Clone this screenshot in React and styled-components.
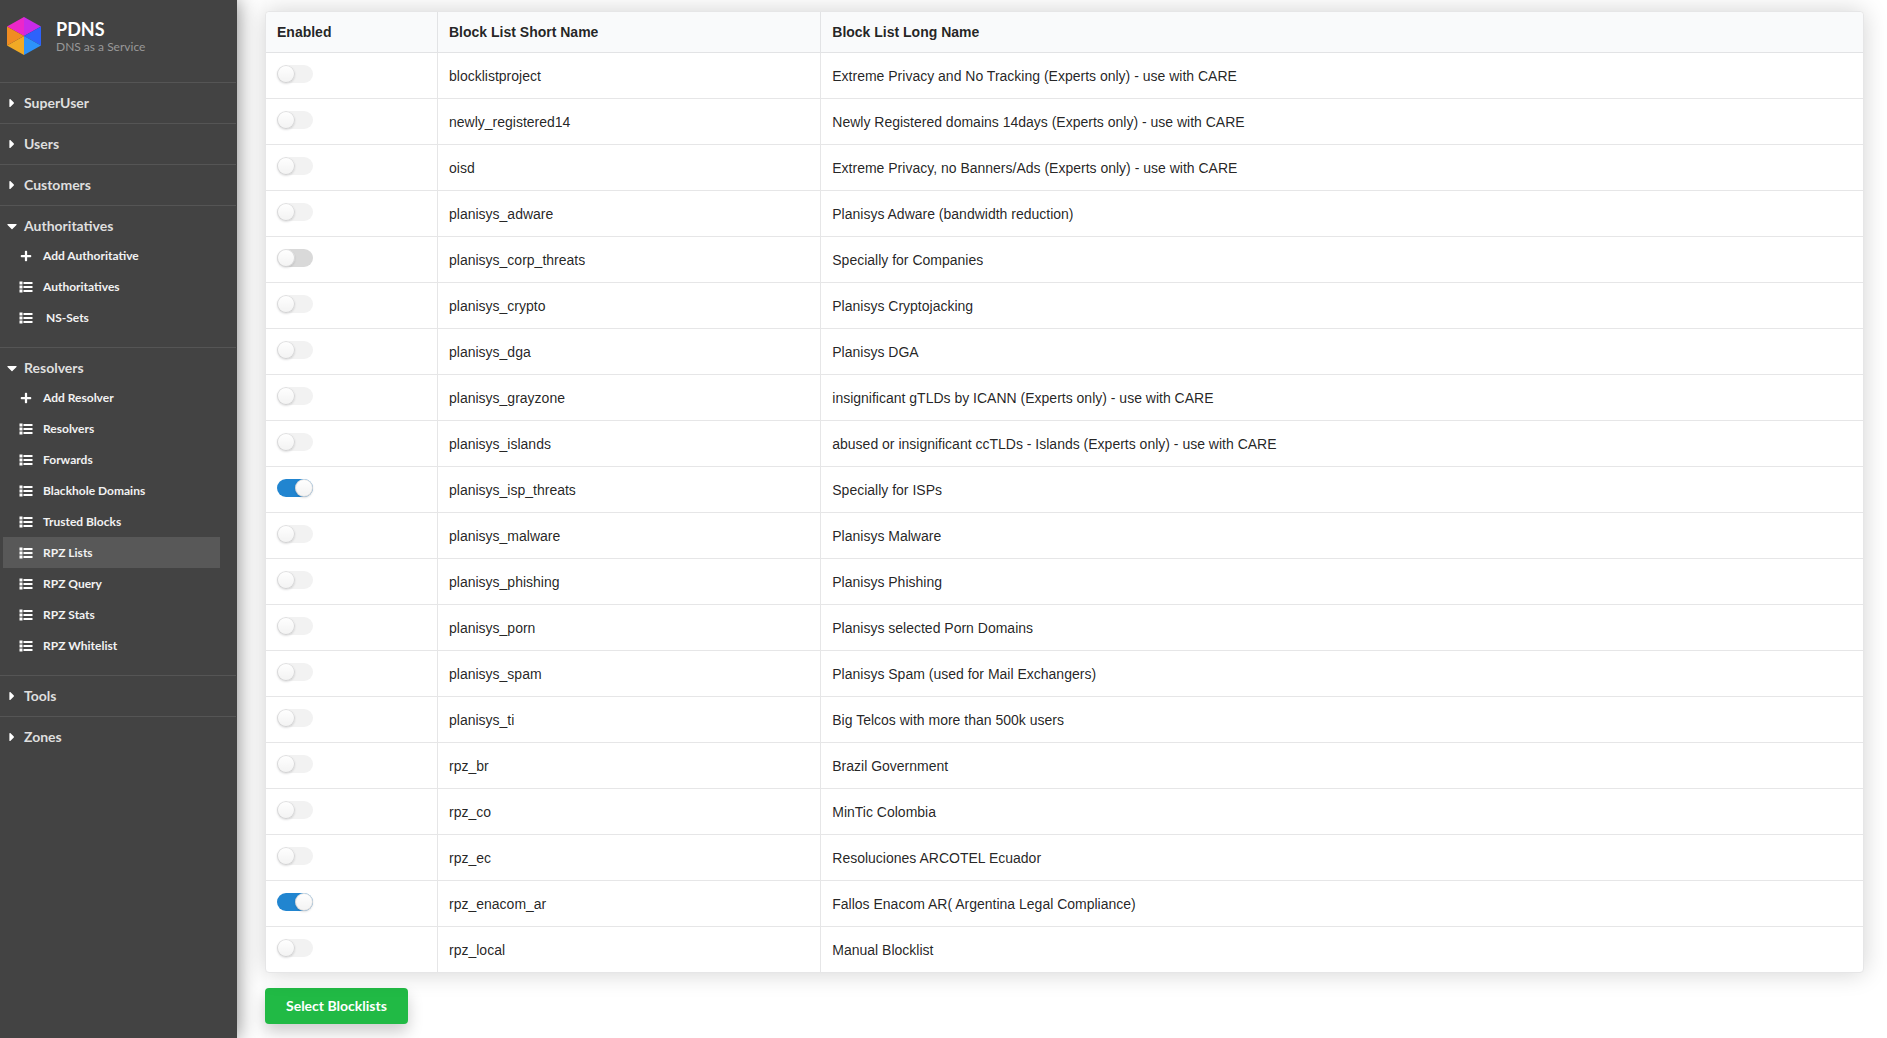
import React, { useState } from "react";
import styled, { createGlobalStyle } from "styled-components";
import { FaCaretDown, FaCaretRight, FaPlus } from "react-icons/fa";

const menu = [
  { title: "SuperUser" },
  { title: "Users" },
  { title: "Customers" },
  {
    title: "Authoritatives",
    items: [
      { label: "Add Authoritative", add: true },
      { label: "Authoritatives" },
      { label: "\u00a0NS-Sets" },
    ],
  },
  {
    title: "Resolvers",
    items: [
      { label: "Add Resolver", add: true },
      { label: "Resolvers" },
      { label: "Forwards" },
      { label: "Blackhole Domains" },
      { label: "Trusted Blocks" },
      { label: "RPZ Lists", active: true },
      { label: "RPZ Query" },
      { label: "RPZ Stats" },
      { label: "RPZ Whitelist" },
    ],
  },
  { title: "Tools" },
  { title: "Zones" },
];

const blockLists = [
  ["blocklistproject", "Extreme Privacy and No Tracking (Experts only) - use with CARE"],
  ["newly_registered14", "Newly Registered domains 14days (Experts only) - use with CARE"],
  ["oisd", "Extreme Privacy, no Banners/Ads (Experts only) - use with CARE"],
  ["planisys_adware", "Planisys Adware (bandwidth reduction)"],
  ["planisys_corp_threats", "Specially for Companies"],
  ["planisys_crypto", "Planisys Cryptojacking"],
  ["planisys_dga", "Planisys DGA"],
  ["planisys_grayzone", "insignificant gTLDs by ICANN (Experts only) - use with CARE"],
  ["planisys_islands", "abused or insignificant ccTLDs - Islands (Experts only) - use with CARE"],
  ["planisys_isp_threats", "Specially for ISPs"],
  ["planisys_malware", "Planisys Malware"],
  ["planisys_phishing", "Planisys Phishing"],
  ["planisys_porn", "Planisys selected Porn Domains"],
  ["planisys_spam", "Planisys Spam (used for Mail Exchangers)"],
  ["planisys_ti", "Big Telcos with more than 500k users"],
  ["rpz_br", "Brazil Government"],
  ["rpz_co", "MinTic Colombia"],
  ["rpz_ec", "Resoluciones ARCOTEL Ecuador"],
  ["rpz_enacom_ar", "Fallos Enacom AR( Argentina Legal Compliance)"],
  ["rpz_local", "Manual Blocklist"],
];

function Logo() {
  return (
    <svg width="34" height="38" viewBox="0 0 34 38" aria-hidden="true">
      <path d="M17 19 0 9.500 17 0Z" fill="#ec27c9" />
      <path d="M17 19V0L34 9.500Z" fill="#c92be8" />
      <path d="M17 19 34 9.500V28.500Z" fill="#2d62fb" />
      <path d="M17 19 34 28.500 17 38Z" fill="#2d93fa" />
      <path d="M17 19V38L0 28.500Z" fill="#f1aa25" />
      <path d="M17 19 0 28.500V9.500Z" fill="#f08c22" />
    </svg>
  );
}

function ListIcon() {
  return (
    <svg viewBox="0 0 14 12" fill="currentColor" aria-hidden="true">
      <path d="M.5.500h3v3h-3zM.5 4.500h3v3h-3zM.5 8.500h3v3h-3z" />
      <path d="M4.500 1h9v2h-9zM4.500 5h9v2h-9zM4.500 9h9v2h-9z" />
    </svg>
  );
}

function Sidebar() {
  return (
    <Side>
      <Brand>
        <Logo />
        <div>
          <BrandName>PDNS</BrandName>
          <BrandText>DNS as a Service</BrandText>
        </div>
      </Brand>
      <nav>
        {menu.map(({ title, items }) => (
          <Section key={title}>
            <SectionTitle type="button" $open={!!items} aria-expanded={!!items}>
              {items ? <FaCaretDown /> : <FaCaretRight />}
              {title}
            </SectionTitle>
            {items && (
              <SubMenu>
                {items.map(({ label, add, active }) => (
                  <li key={label}>
                    <SubLink href="#" $active={active}>
                      {add ? <FaPlus /> : <ListIcon />}
                      {label}
                    </SubLink>
                  </li>
                ))}
              </SubMenu>
            )}
          </Section>
        ))}
      </nav>
    </Side>
  );
}

export default function App() {
  const [enabled, setEnabled] = useState(["planisys_isp_threats", "rpz_enacom_ar"]);

  const toggle = (name) => {
    setEnabled(
      enabled.includes(name) ? enabled.filter((n) => n !== name) : [...enabled, name]
    );
  };

  return (
    <Page>
      <GlobalStyle />
      <Sidebar />
      <Main>
        <Table>
          <thead>
            <tr>
              <Th $width="171px">Enabled</Th>
              <Th $width="24%">Block List Short Name</Th>
              <Th>Block List Long Name</Th>
            </tr>
          </thead>
          <tbody>
            {blockLists.map(([name, text]) => (
              <tr key={name}>
                <Td>
                  <Toggle
                    type="checkbox"
                    id={name}
                    checked={enabled.includes(name)}
                    onChange={() => toggle(name)}
                    $hot={name === "planisys_corp_threats"}
                  />
                </Td>
                <Td>
                  <label htmlFor={name}>{name}</label>
                </Td>
                <Td>{text}</Td>
              </tr>
            ))}
          </tbody>
        </Table>
        <SubmitButton type="submit">Select Blocklists</SubmitButton>
      </Main>
    </Page>
  );
}

const GlobalStyle = createGlobalStyle`
  *, *::before, *::after {
    box-sizing: border-box;
  }

  body {
    margin: 0;
    background: #fff;
    color: rgba(0, 0, 0, 0.87);
    font-family: Lato, sans-serif;
    font-size: 14px;
  }
`;

const Page = styled.div`
  display: flex;
  min-height: 100vh;
`;

const Side = styled.aside`
  flex: 0 0 237px;
  padding-right: 1px;
  background: #434343;
  box-shadow: 0 0 20px rgba(0, 0, 0, 0.5);
`;

const Brand = styled.div`
  display: flex;
  gap: 15px;
  height: 82px;
  padding: 17px 7px 0;
`;

const BrandName = styled.div`
  color: #fff;
  font-size: 18px;
  font-weight: 700;
  line-height: 24px;
`;

const BrandText = styled.div`
  color: #999;
  font-size: 12px;
  line-height: 12px;
`;

const Section = styled.section`
  border-top: 1px solid #555;
`;

const SectionTitle = styled.button`
  display: flex;
  align-items: center;
  gap: 7px;
  width: 100%;
  height: ${(props) => (props.$open ? "34px" : "40px")};
  padding: ${(props) => (props.$open ? "6px 0 0 7px" : "0 0 0 7px")};
  border: 0;
  background: none;
  color: #dfdfdf;
  font: 700 14px/20px Lato, sans-serif;
  text-align: left;
  cursor: pointer;

  svg {
    width: 10px;
    height: ${(props) => (props.$open ? "16px" : "14px")};
    color: #fff;
  }
`;

const SubMenu = styled.ul`
  margin: 0;
  padding: 0 16px 14px 3px;
  list-style: none;
`;

const SubLink = styled.a`
  display: flex;
  align-items: center;
  gap: 10px;
  height: 31px;
  padding-left: 16px;
  background: ${(props) => (props.$active ? "#585858" : "transparent")};
  color: #f2f2f2;
  font-size: 12px;
  font-weight: 700;
  text-decoration: none;

  svg {
    width: 14px;
    height: 12px;
    color: #fff;
  }
`;

const Main = styled.main`
  flex: 1;
  min-width: 0;
  padding: 11px 23px 15px 28px;
`;

const Table = styled.table`
  position: relative;
  width: 100%;
  margin-bottom: 15px;
  border: 1px solid #e6e6e7;
  border-radius: 4px;
  border-collapse: separate;
  border-spacing: 0;
  table-layout: fixed;
  background: #fff;
  box-shadow: 0 0 24px rgba(0, 0, 0, 0.18);
  font-family: "Liberation Sans", Arial, sans-serif;
`;

const Th = styled.th`
  width: ${(props) => props.$width || "auto"};
  height: 41px;
  padding: 0 11px;
  border-bottom: 1px solid #e2e3e5;
  border-left: 1px solid #e2e3e5;
  background: #f9fafb;
  font-weight: 700;
  text-align: left;

  &:first-child {
    border-left: 0;
    border-top-left-radius: 4px;
  }

  &:last-child {
    border-top-right-radius: 4px;
  }
`;

const Td = styled.td`
  height: 46px;
  padding: 0 11px;
  border-bottom: 1px solid #e6e6e7;
  border-left: 1px solid #e6e6e7;

  &:first-child {
    border-left: 0;
  }

  tr:last-child > & {
    height: 45px;
    border-bottom: 0;
  }
`;

const Toggle = styled.input`
  display: block;
  appearance: none;
  width: 36px;
  height: 18px;
  margin: 0 0 4px;
  border-radius: 9px;
  background: ${(props) => (props.$hot ? "#d9d9d9" : "#f2f2f2")};
  cursor: pointer;

  &::before {
    content: "";
    display: block;
    width: 18px;
    height: 18px;
    border-radius: 50%;
    background: #fff linear-gradient(transparent, rgba(0, 0, 0, 0.05));
    box-shadow: 0 1px 2px rgba(34, 36, 38, 0.15), 0 0 0 1px rgba(34, 36, 38, 0.15) inset;
  }

  &:checked {
    background: #2185d0;
  }

  &:checked::before {
    margin-left: 18px;
  }
`;

const SubmitButton = styled.button`
  height: 36px;
  padding: 0 21px;
  border: 0;
  border-radius: 4px;
  background: #21ba45;
  box-shadow: 0 8px 16px rgba(0, 0, 0, 0.2);
  color: #fff;
  font: 700 14px/14px Lato, sans-serif;
  cursor: pointer;
`;
